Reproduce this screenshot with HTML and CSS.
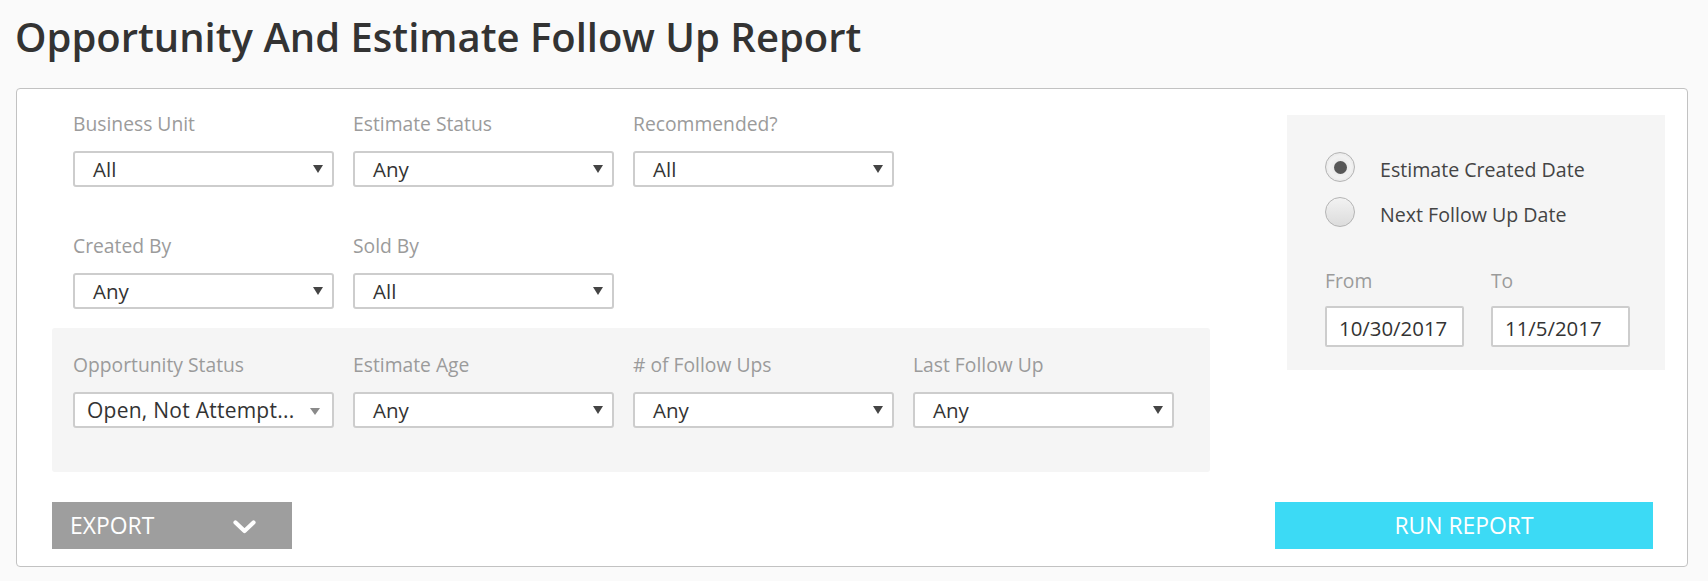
FILE: index.html
```html
<!DOCTYPE html>
<html lang="en">
<head>
<meta charset="utf-8">
<title>Opportunity And Estimate Follow Up Report</title>
<link rel="stylesheet" href="styles.css">
</head>
<body>
<div class="page">
  <h1 class="title">Opportunity And Estimate Follow Up Report</h1>
  <div class="card">
    <div class="top">
      <div class="filters">
        <div class="plain">
          <div class="row">
            <div class="field">
              <div class="label">Business Unit</div>
              <div class="select"><span class="value">All</span><svg class="arrow" viewBox="0 0 10 8" width="10" height="8"><path d="M0 0H10L5 8Z"/></svg></div>
            </div>
            <div class="field">
              <div class="label">Estimate Status</div>
              <div class="select"><span class="value">Any</span><svg class="arrow" viewBox="0 0 10 8" width="10" height="8"><path d="M0 0H10L5 8Z"/></svg></div>
            </div>
            <div class="field">
              <div class="label">Recommended?</div>
              <div class="select"><span class="value">All</span><svg class="arrow" viewBox="0 0 10 8" width="10" height="8"><path d="M0 0H10L5 8Z"/></svg></div>
            </div>
          </div>
          <div class="row row-second">
            <div class="field">
              <div class="label">Created By</div>
              <div class="select"><span class="value">Any</span><svg class="arrow" viewBox="0 0 10 8" width="10" height="8"><path d="M0 0H10L5 8Z"/></svg></div>
            </div>
            <div class="field">
              <div class="label">Sold By</div>
              <div class="select"><span class="value">All</span><svg class="arrow" viewBox="0 0 10 8" width="10" height="8"><path d="M0 0H10L5 8Z"/></svg></div>
            </div>
          </div>
        </div>
        <div class="shaded">
          <div class="row">
            <div class="field">
              <div class="label">Opportunity Status</div>
              <div class="select multi"><span class="value">Open, Not Attempt...</span><svg class="arrow light" viewBox="0 0 10 7" width="10" height="7"><path d="M0 0H10L5 7Z"/></svg></div>
            </div>
            <div class="field">
              <div class="label">Estimate Age</div>
              <div class="select"><span class="value">Any</span><svg class="arrow" viewBox="0 0 10 8" width="10" height="8"><path d="M0 0H10L5 8Z"/></svg></div>
            </div>
            <div class="field">
              <div class="label"># of Follow Ups</div>
              <div class="select"><span class="value">Any</span><svg class="arrow" viewBox="0 0 10 8" width="10" height="8"><path d="M0 0H10L5 8Z"/></svg></div>
            </div>
            <div class="field">
              <div class="label">Last Follow Up</div>
              <div class="select"><span class="value">Any</span><svg class="arrow" viewBox="0 0 10 8" width="10" height="8"><path d="M0 0H10L5 8Z"/></svg></div>
            </div>
          </div>
        </div>
      </div>
      <div class="dates">
        <div class="radios">
          <div class="radio-item">
            <span class="radio checked"><span class="dot"></span></span>
            <span class="radio-label">Estimate Created Date</span>
          </div>
          <div class="radio-item">
            <span class="radio"></span>
            <span class="radio-label">Next Follow Up Date</span>
          </div>
        </div>
        <div class="range">
          <div class="date-field">
            <div class="label">From</div>
            <div class="date-input">10/30/2017</div>
          </div>
          <div class="date-field">
            <div class="label">To</div>
            <div class="date-input">11/5/2017</div>
          </div>
        </div>
      </div>
    </div>
    <div class="actions">
      <div class="btn export"><span>EXPORT</span><svg class="chevron" viewBox="0 0 23 14" width="23" height="14"><path d="M2.5 2.5L11.5 11L20.5 2.5"/></svg></div>
      <div class="btn run">RUN REPORT</div>
    </div>
  </div>
</div>
</body>
</html>
```

FILE: styles.css
```css
* { box-sizing: border-box; }

html, body {
  margin: 0;
  padding: 0;
  background: #fafafa;
  font-family: "Open Sans", "Noto Sans", "Liberation Sans", sans-serif;
  color: #333;
}

.page {
  width: 1708px;
  padding: 0 20px 0 16px;
}

.title {
  margin: 0 0 28px -1px;
  padding-top: 13px;
  font-size: 40px;
  line-height: 47px;
  font-weight: 600;
  color: #333;
  white-space: nowrap;
}

.card {
  background: #fff;
  border: 1px solid #c2c2c2;
  border-radius: 4px;
  padding: 0 22px 17px 35px;
  height: 479px;
}

.top {
  display: flex;
  justify-content: space-between;
  align-items: flex-start;
}

.filters {
  width: 1158px;
}

.plain {
  padding: 23px 21px 0;
}

.row {
  display: flex;
  gap: 19px;
}

.row-second {
  margin-top: 47px;
}

.field {
  width: 261px;
}

.label {
  font-size: 19.3px;
  line-height: 24px;
  color: #9b9b9b;
  margin-bottom: 15px;
  white-space: nowrap;
}

.select {
  height: 36px;
  border: 2px solid #cdcdcd;
  border-radius: 3px;
  background: #fff;
  display: flex;
  align-items: center;
  padding: 0 9px 0 18px;
}

.value {
  flex: 1;
  font-size: 20.5px;
  line-height: 32px;
  color: #333;
  white-space: nowrap;
}

.arrow {
  fill: #444;
  flex: none;
}

.arrow.light {
  fill: #8a8a8a;
  margin-right: 3px;
  margin-top: 3px;
}

.multi {
  padding-left: 12px;
}

.multi .value {
  font-size: 21px;
  letter-spacing: 0.25px;
}

.shaded {
  margin-top: 19px;
  background: #f5f5f5;
  border-radius: 3px;
  padding: 25px 21px 44px;
}

.dates {
  width: 378px;
  margin-top: 26px;
  background: #f5f5f5;
  padding: 37px 20px 23px 38px;
}

.radios {
  display: flex;
  flex-direction: column;
  gap: 15px;
}

.radio-item {
  display: flex;
  align-items: flex-start;
  gap: 25px;
  height: 30px;
}

.radio {
  width: 30px;
  height: 30px;
  border-radius: 50%;
  border: 1px solid #b4b4b4;
  background: linear-gradient(#f2f2f2, #dcdcdc);
  display: flex;
  align-items: center;
  justify-content: center;
  flex: none;
}

.radio.checked {
  background: radial-gradient(circle, #e2e2e2 0, #f2f2f2 55%, #dadada 100%);
}

.dot {
  width: 13px;
  height: 13px;
  border-radius: 50%;
  background: #575757;
}

.radio-label {
  font-size: 19.6px;
  line-height: 26px;
  margin-top: 5px;
  color: #444;
  white-space: nowrap;
}

.range {
  display: flex;
  gap: 27px;
  margin-top: 42px;
}

.date-field {
  width: 139px;
}

.date-field .label {
  margin-bottom: 13px;
}

.date-input {
  height: 41px;
  border: 2px solid #cdcdcd;
  border-radius: 2px;
  background: #fff;
  padding: 3px 0 0 12px;
  font-size: 20.4px;
  line-height: 34px;
  color: #333;
  white-space: nowrap;
}

.actions {
  display: flex;
  justify-content: space-between;
  margin-top: 30px;
}

.btn {
  height: 47px;
  color: #fff;
  font-size: 22.9px;
  font-weight: 400;
  line-height: 46px;
  padding-top: 1px;
  white-space: nowrap;
}

.export {
  width: 240px;
  background: #9e9e9e;
  display: flex;
  align-items: center;
  padding-left: 18px;
  padding-right: 36px;
  justify-content: space-between;
}

.chevron {
  fill: none;
  stroke: #fff;
  stroke-width: 4.2;
  stroke-linecap: round;
  stroke-linejoin: round;
  margin-top: 1px;
}

.run {
  width: 378px;
  margin-right: 12px;
  background: #3cdaf5;
  text-align: center;
}
```
